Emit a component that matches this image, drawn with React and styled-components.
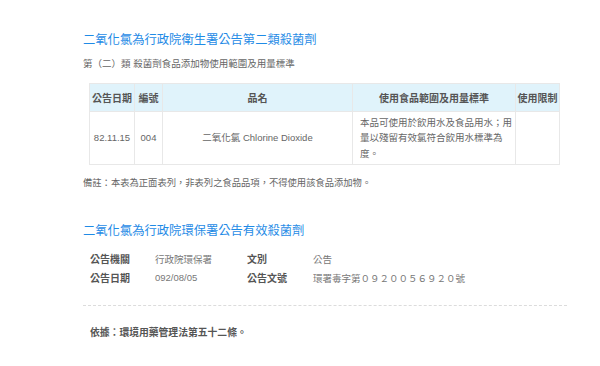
import React from "react";
import styled, { createGlobalStyle } from "styled-components";

const GlobalStyle = createGlobalStyle`
    body {
        margin: 0;
        background: #ffffff;
        font-family: "Liberation Sans", "Noto Sans CJK TC", sans-serif;
    }
`;

const Page = styled.div`
    width: 484px;
    padding: 30px 33px 20px 83px;
`;
const Title = styled.h2`
    margin: ${props => props.top || 0}px 0 0 0;
    font-size: 12.3px;
    line-height: 20px;
    font-weight: normal;
    color: #1f8be6;
`;
const Subtitle = styled.div`
    margin-top: 7px;
    font-size: 9.5px;
    line-height: 14px;
    color: #666;
`;
const Table = styled.table`
    margin: 12px 0 0 6px;
    width: 470px;
    table-layout: fixed;
    border-collapse: collapse;
    font-size: 9.5px;
    color: #666;
`;
const HeadCell = styled.th`
    height: 27px;
    padding: 0;
    background: #e0f3fb;
    border: 1px solid #e8e8e8;
    font-size: 10px;
    font-weight: bold;
    color: #555;
    text-align: center;
`;
const Cell = styled.td`
    height: 52px;
    padding: 0 2px 0 ${props => (props.left ? 7 : 2)}px;
    border: 1px solid #e8e8e8;
    line-height: 15.5px;
    text-align: ${props => (props.left ? "left" : "center")};
    vertical-align: middle;
`;
const Note = styled.div`
    margin-top: 11px;
    font-size: 9.3px;
    line-height: 14px;
    color: #666;
`;
const InfoGrid = styled.div`
    margin: 8px 0 0 7px;
    display: grid;
    grid-template-columns: 65px 92px 66px 1fr;
    grid-auto-rows: 19px;
    align-items: center;
`;
const Label = styled.span`
    font-size: 10px;
    font-weight: bold;
    color: #555;
`;
const Value = styled.span`
    font-size: 9.5px;
    color: #777;
`;
const Divider = styled.hr`
    margin: 18px 0 0 0;
    border: 0;
    border-top: 1px dashed #dcdcdc;
`;
const Basis = styled.div`
    margin: 20px 0 0 7px;
    font-size: 9.8px;
    line-height: 14px;
    font-weight: bold;
    color: #555;
`;

const COLUMNS = [45, 28, 190, 163, 44];

export default function App() {
    return (
        <Page>
            <GlobalStyle />
            <Title>二氧化氯為行政院衛生署公告第二類殺菌劑</Title>
            <Subtitle>第（二）類 殺菌劑食品添加物使用範圍及用量標準</Subtitle>
            <Table>
                <colgroup>
                    {COLUMNS.map((w, i) => (
                        <col key={i} style={{ width: w }} />
                    ))}
                </colgroup>
                <thead>
                    <tr>
                        <HeadCell>公告日期</HeadCell>
                        <HeadCell>編號</HeadCell>
                        <HeadCell>品名</HeadCell>
                        <HeadCell>使用食品範圍及用量標準</HeadCell>
                        <HeadCell>使用限制</HeadCell>
                    </tr>
                </thead>
                <tbody>
                    <tr>
                        <Cell>82.11.15</Cell>
                        <Cell>004</Cell>
                        <Cell>二氧化氯 Chlorine Dioxide</Cell>
                        <Cell left>本品可使用於飲用水及食品用水；用量以殘留有效氯符合飲用水標準為度。</Cell>
                        <Cell />
                    </tr>
                </tbody>
            </Table>
            <Note>備註：本表為正面表列，非表列之食品品項，不得使用該食品添加物。</Note>
            <Title top={31}>二氧化氯為行政院環保署公告有效殺菌劑</Title>
            <InfoGrid>
                <Label>公告機關</Label>
                <Value>行政院環保署</Value>
                <Label>文別</Label>
                <Value>公告</Value>
                <Label>公告日期</Label>
                <Value>092/08/05</Value>
                <Label>公告文號</Label>
                <Value>環署毒字第０９２００５６９２０號</Value>
            </InfoGrid>
            <Divider />
            <Basis>依據：環境用藥管理法第五十二條。</Basis>
        </Page>
    );
}
